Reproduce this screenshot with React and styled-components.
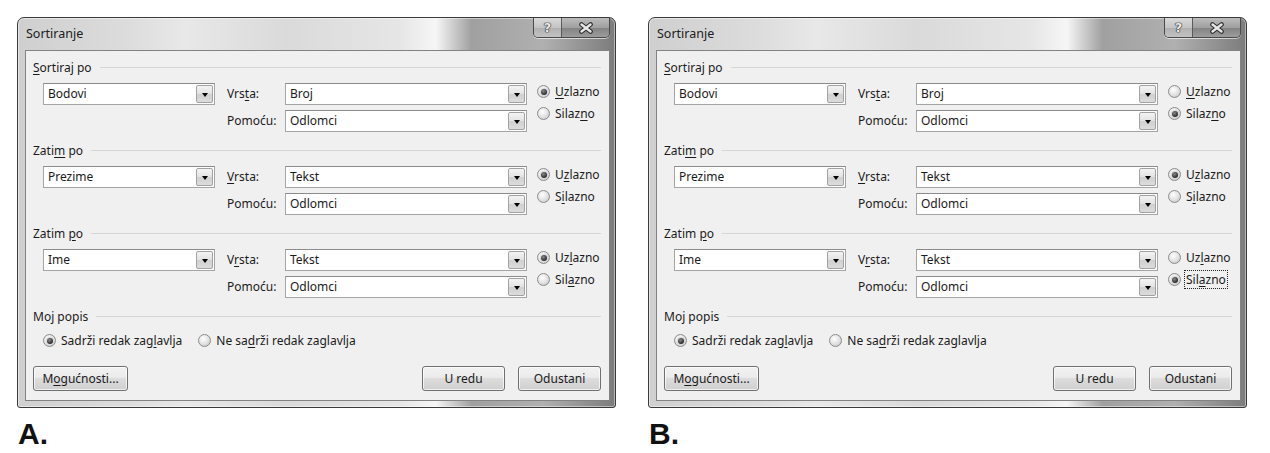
import React from 'react'
import styled, { createGlobalStyle } from 'styled-components'

const GlobalStyle = createGlobalStyle`
  body {
    margin: 0;
    background: #fff;
    font-family: "Noto Sans", "Open Sans", sans-serif;
    color: #1b1b1b;
  }
`

// the data for both dialogs: which radio is picked in each group
const dialogs = [
  { tag: 'A.', order: ['up', 'up', 'up'], focus: -1 },
  { tag: 'B.', order: ['down', 'up', 'down'], focus: 2 },
]

const groups = [
  {
    title: <><K>S</K>ortiraj po</>,
    field: 'Bodovi',
    kindLabel: <>Vrs<K>t</K>a:</>,
    kind: 'Broj',
    up: <><K>U</K>zlazno</>,
    down: <>Silaz<K>n</K>o</>,
  },
  {
    title: <>Zati<K>m</K> po</>,
    field: 'Prezime',
    kindLabel: <><K>V</K>rsta:</>,
    kind: 'Tekst',
    up: <>U<K>z</K>lazno</>,
    down: <>S<K>i</K>lazno</>,
  },
  {
    title: <>Zatim <K>p</K>o</>,
    field: 'Ime',
    kindLabel: <>V<K>r</K>sta:</>,
    kind: 'Tekst',
    up: <>Uz<K>l</K>azno</>,
    down: <>Sil<K>a</K>zno</>,
  },
]

function K({ children }) {
  return <Under>{children}</Under>
}

const Combo = ({ value }) => (
  <ComboBox>
    <ComboText>{value}</ComboText>
    <DropButton><Arrow /></DropButton>
  </ComboBox>
)

const Radio = ({ checked, focus, children }) => (
  <RadioItem>
    <RadioCircle $checked={checked} />
    <RadioText $focus={focus}>{children}</RadioText>
  </RadioItem>
)

const Dialog = ({ data }) => (
  <Figure>
    <Window>
      <TitleBar>
        <Title>Sortiranje</Title>
        <Caption>
          <HelpBtn>?</HelpBtn>
          <CloseBtn>
            <svg width="16" height="12" viewBox="0 0 16 12">
              <path d="M3.5 2.5 L12.5 9.5 M12.5 2.5 L3.5 9.5" stroke="#2e2e2e" strokeWidth="4.6" strokeLinecap="round" />
              <path d="M3.5 2.5 L12.5 9.5 M12.5 2.5 L3.5 9.5" stroke="#e6e6e6" strokeWidth="2.4" strokeLinecap="round" />
            </svg>
          </CloseBtn>
        </Caption>
      </TitleBar>
      <Client>
        {groups.map((g, i) => (
          <Group key={i}>
            <GroupHeader><span>{g.title}</span><Rule /></GroupHeader>
            <GroupGrid>
              <Combo value={g.field} />
              <FieldLabel>{g.kindLabel}</FieldLabel>
              <Combo value={g.kind} />
              <RadioStack>
                <Radio checked={data.order[i] === 'up'}>{g.up}</Radio>
                <Radio checked={data.order[i] === 'down'} focus={data.focus === i}>{g.down}</Radio>
              </RadioStack>
              <span />
              <FieldLabel>Pomoću:</FieldLabel>
              <Combo value="Odlomci" />
            </GroupGrid>
          </Group>
        ))}
        <GroupHeader><span>Moj popis</span><Rule /></GroupHeader>
        <HeaderRadios>
          <Radio checked>Sadrži redak zag<K>l</K>avlja</Radio>
          <Radio>Ne sa<K>d</K>rži redak zaglavlja</Radio>
        </HeaderRadios>
        <Buttons>
          <Button $w={95}><span>M<K>o</K>gućnosti...</span></Button>
          <Spacer />
          <Button $w={83}>U redu</Button>
          <Button $w={83}>Odustani</Button>
        </Buttons>
      </Client>
    </Window>
    <Tag>{data.tag}</Tag>
  </Figure>
)

export default function App() {
  return (
    <>
      <GlobalStyle />
      <Page>
        {dialogs.map(d => <Dialog key={d.tag} data={d} />)}
      </Page>
    </>
  )
}

const Page = styled.div`
  display: flex;
  gap: 32px;
  padding: 17px 0 0 17px;
`
const Figure = styled.div`
  display: flex;
  flex-direction: column;
`
const Tag = styled.div`
  font-family: "Liberation Sans", Arial, sans-serif;
  font-weight: 700;
  font-size: 30px;
  line-height: 34px;
  margin: 9px 0 0 1px;
  color: #111;
`
const Window = styled.div`
  width: 599px;
  box-sizing: border-box;
  border: 1px solid #3a3a3a;
  border-radius: 7px 7px 3px 3px;
  padding: 0 5px 6px 7px;
  background:
    linear-gradient(to right, #cfcfcf 0%, #dcdcdc 18%, #e8e8e8 28%, #dadada 45%, #e6e6e6 64%, #f6f6f6 70%, #a0a0a0 76%, #b0b0b0 88%, #7c7c7c 100%);
  box-shadow: inset 0 0 0 1px rgba(255, 255, 255, 0.45);
`
const TitleBar = styled.div`
  height: 32px;
  display: flex;
  justify-content: space-between;
  align-items: flex-start;
`
const Title = styled.div`
  font-size: 12.5px;
  padding: 7px 0 0 1px;
  color: #202020;
`
const Caption = styled.div`
  display: flex;
  height: 19px;
  border: 1px solid #4a4a4a;
  border-top: none;
  border-radius: 0 0 5px 5px;
  overflow: hidden;
  box-shadow: 0 1px 0 rgba(255, 255, 255, 0.6);
`
const HelpBtn = styled.div`
  width: 27px;
  display: flex;
  align-items: center;
  justify-content: center;
  background: linear-gradient(#dadada, #c4c4c4 50%, #b0b0b0 51%, #c2c2c2);
  border-right: 1px solid #5a5a5a;
  font-family: "DejaVu Sans", sans-serif;
  font-weight: 700;
  font-size: 13px;
  color: #ececec;
  text-shadow: 0 0 1px #333, 0 0 1px #333, 0 0 1px #333, 0 0 1px #333;
`
const CloseBtn = styled.div`
  width: 47px;
  display: flex;
  align-items: center;
  justify-content: center;
  background: linear-gradient(#bcbcbc, #a0a0a0 50%, #828282 51%, #9c9c9c);
`
const Client = styled.div`
  background: #f0f0f0;
  border: 1px solid #828282;
  height: 351px;
  box-sizing: border-box;
  padding: 9px 8px 9px 7px;
  display: flex;
  flex-direction: column;
  font-size: 12px;
`
const Group = styled.div`
  margin-bottom: 11px;
`
const GroupHeader = styled.div`
  display: flex;
  align-items: center;
  height: 15px;
  white-space: nowrap;
`
const Rule = styled.div`
  flex: 1;
  height: 1px;
  margin-left: 8px;
  background: #d6d6d6;
`
const GroupGrid = styled.div`
  display: grid;
  grid-template-columns: 172px 70px 242px auto;
  grid-template-rows: 22px 22px;
  row-gap: 5px;
  margin: 8px 0 0 10px;
`
const ComboBox = styled.div`
  display: flex;
  border: 1px solid #a5a5a5;
  border-top-color: #8c8c8c;
  background: #fff;
  box-sizing: border-box;
`
const ComboText = styled.div`
  flex: 1;
  padding-left: 4px;
  line-height: 20px;
  white-space: nowrap;
`
const DropButton = styled.div`
  width: 15px;
  margin: 1px;
  border: 1px solid #a2a2a2;
  border-radius: 2px;
  background: linear-gradient(#f4f4f4, #e2e2e2 50%, #d0d0d0 51%, #dcdcdc);
  display: flex;
  align-items: center;
  justify-content: center;
`
const Arrow = styled.div`
  width: 0;
  height: 0;
  border-left: 3.5px solid transparent;
  border-right: 3.5px solid transparent;
  border-top: 4px solid #000;
  margin-top: 1px;
`
const FieldLabel = styled.div`
  padding-left: 12px;
  line-height: 22px;
  white-space: nowrap;
`
const RadioStack = styled.div`
  grid-row: 1 / 3;
  grid-column: 4;
  padding: 1px 0 0 10px;
  display: flex;
  flex-direction: column;
  gap: 7px;
`
const RadioItem = styled.div`
  display: flex;
  align-items: center;
  gap: 5px;
  height: 15px;
  white-space: nowrap;
`
const RadioCircle = styled.div`
  width: 13px;
  height: 13px;
  box-sizing: border-box;
  border-radius: 50%;
  border: 1px solid #8c8c8c;
  background: radial-gradient(circle at 40% 35%, #ffffff 0%, #e0e0e0 55%, #bcbcbc 100%);
  display: flex;
  align-items: center;
  justify-content: center;
  &::after {
    content: '';
    display: ${p => (p.$checked ? 'block' : 'none')};
    width: 6px;
    height: 6px;
    border-radius: 50%;
    background: radial-gradient(circle at 40% 35%, #8a8a8a 0%, #2a2a2a 70%, #111 100%);
    box-shadow: 0 0 0 1px #d8d8d8;
  }
`
const RadioText = styled.span`
  outline: ${p => (p.$focus ? '1px dotted #222' : 'none')};
  outline-offset: 0;
  padding: 0 1px;
  margin-left: -1px;
`
const HeaderRadios = styled.div`
  display: flex;
  gap: 15px;
  margin: 9px 0 0 10px;
`
const Buttons = styled.div`
  display: flex;
  gap: 13px;
  margin-top: auto;
`
const Spacer = styled.div`
  flex: 1;
`
const Button = styled.div`
  width: ${p => p.$w}px;
  height: 25px;
  box-sizing: border-box;
  border: 1px solid #707070;
  border-radius: 3px;
  background: linear-gradient(#f2f2f2, #ebebeb 45%, #dddddd 50%, #cfcfcf);
  box-shadow: inset 0 0 0 1px rgba(255, 255, 255, 0.7);
  display: flex;
  align-items: center;
  justify-content: center;
  white-space: nowrap;
`
const Under = styled.span`
  text-decoration: underline;
  text-underline-offset: 2px;
`
